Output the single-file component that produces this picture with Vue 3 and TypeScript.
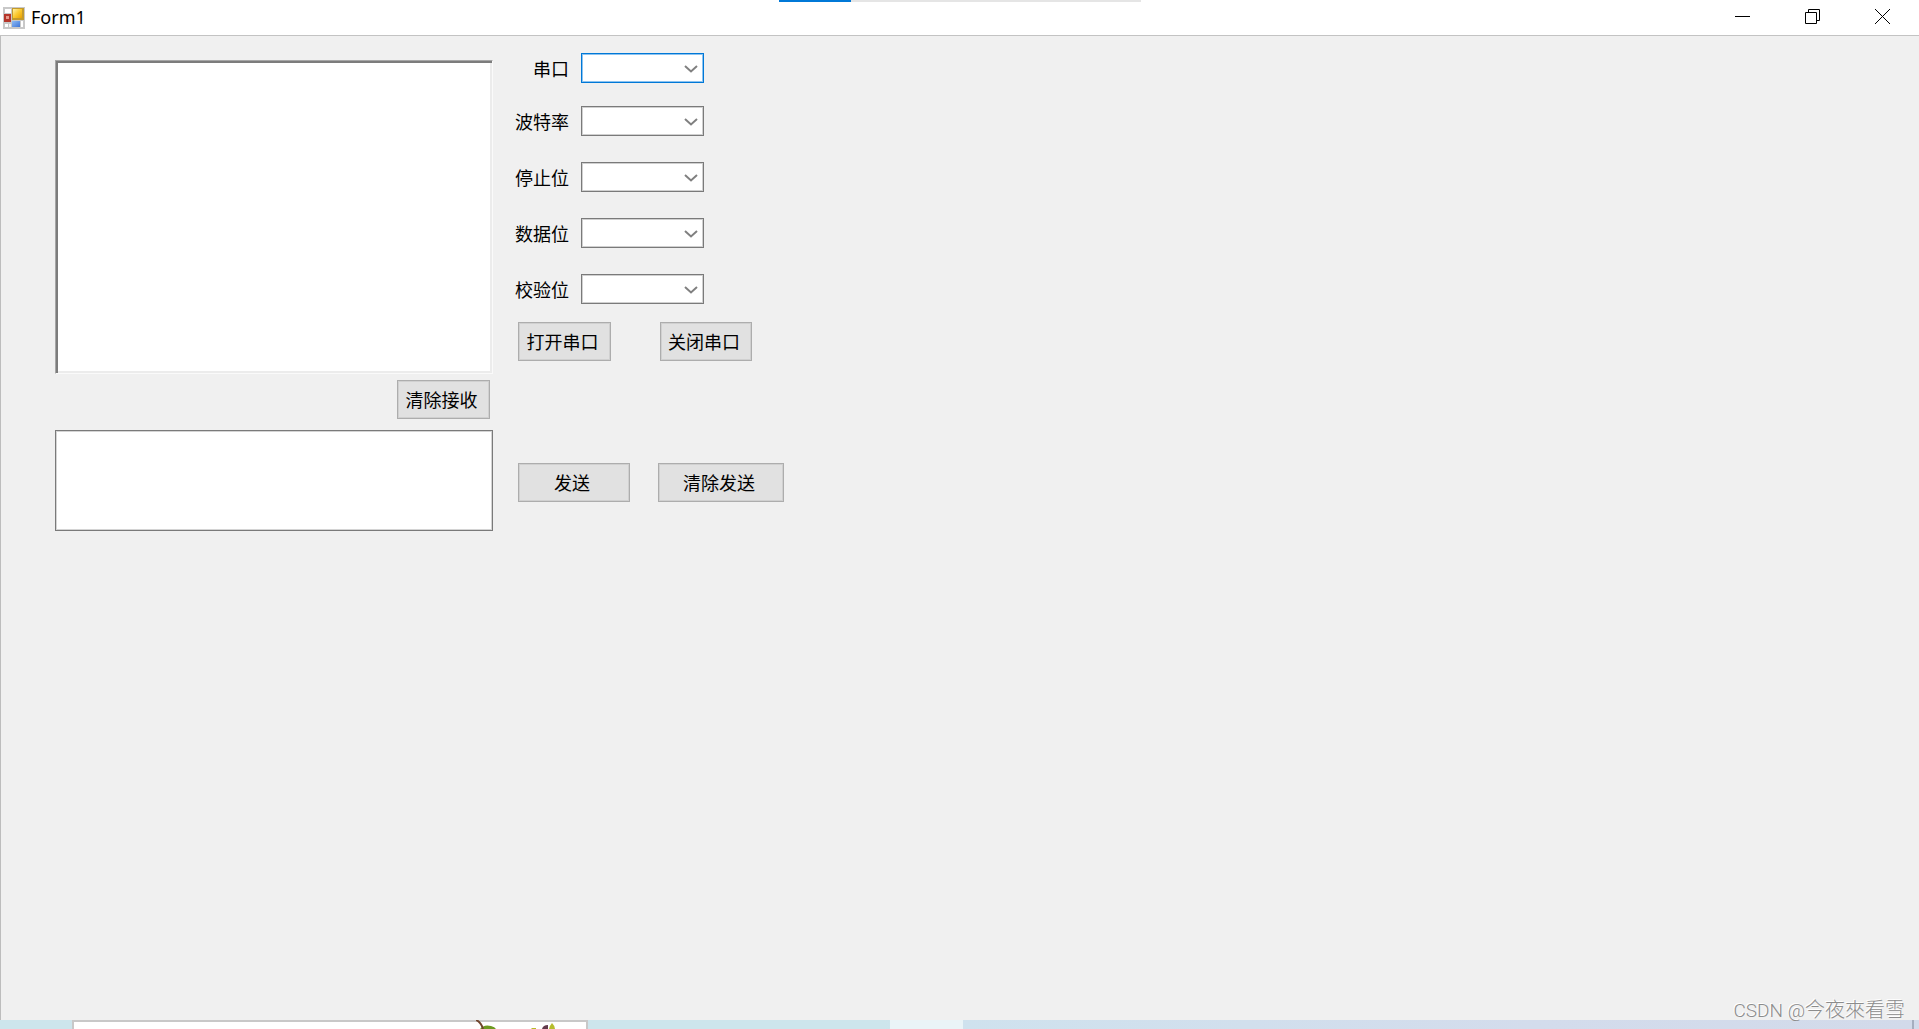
<script setup lang="ts">
import { reactive, ref } from 'vue'

interface Setting {
  id: string
  label: string
  options: string[]
}

const settings: Setting[] = [
  { id: 'port', label: '串口', options: [] },
  { id: 'baud', label: '波特率', options: [] },
  { id: 'stop', label: '停止位', options: [] },
  { id: 'data', label: '数据位', options: [] },
  { id: 'parity', label: '校验位', options: [] },
]

const values = reactive<Record<string, string>>({})
const received = ref('')
const outgoing = ref('')
</script>

<template>
  <div class="screen">
    <div class="loading"><div class="loading-bar"></div></div>
    <header class="titlebar">
      <svg class="app-icon" width="22" height="22" viewBox="0 0 22 22" aria-hidden="true">
        <defs>
          <linearGradient id="gold" x1="0" y1="0" x2="1" y2="1">
            <stop offset="0" stop-color="#fff0a0" />
            <stop offset="0.5" stop-color="#fbc92f" />
            <stop offset="1" stop-color="#e8a000" />
          </linearGradient>
          <linearGradient id="azure" x1="0" y1="0" x2="1" y2="1">
            <stop offset="0" stop-color="#8dbbf5" />
            <stop offset="1" stop-color="#3f76d8" />
          </linearGradient>
        </defs>
        <rect width="22" height="22" fill="#c8c8c8" />
        <rect x="2" y="2" width="6" height="4" fill="#fff" />
        <rect x="1" y="7" width="7" height="8" fill="#b5362b" />
        <rect x="3" y="9" width="3" height="3" fill="#e79a8c" />
        <rect x="9" y="1" width="12" height="12" fill="#c39a2c" />
        <rect x="10" y="2" width="9" height="9" fill="url(#gold)" />
        <rect x="9" y="14" width="8" height="6" fill="url(#azure)" />
        <rect x="2" y="17" width="3" height="3" fill="#fff" />
        <rect x="6" y="17" width="2" height="3" fill="#f4f4f4" />
        <rect x="18" y="14" width="2" height="6" fill="#fff" />
      </svg>
      <h1 class="title">Form1</h1>
      <button class="caption" type="button" aria-label="最小化">
        <svg width="16" height="16" viewBox="0 0 16 16"><path d="M0 7.5H15" /></svg>
      </button>
      <button class="caption" type="button" aria-label="还原">
        <svg width="16" height="16" viewBox="0 0 16 16">
          <path d="M.5 3.5H11.5V14.5H.5ZM3.5 3.5V.5H14.5V11.5H11.5" />
        </svg>
      </button>
      <button class="caption" type="button" aria-label="关闭">
        <svg width="16" height="16" viewBox="0 0 16 16"><path d="M0 0L15 15M15 0L0 15" /></svg>
      </button>
    </header>

    <main class="client">
      <section class="buffers">
        <textarea v-model="received" class="receive" aria-label="接收"></textarea>
        <button class="btn" type="button">清除接收</button>
        <textarea v-model="outgoing" class="send" aria-label="发送"></textarea>
      </section>

      <section class="controls">
        <div v-for="s in settings" :key="s.id" class="setting">
          <label :for="s.id">{{ s.label }}</label>
          <span class="combo">
            <select :id="s.id" v-model="values[s.id]" :class="{ active: s.id === 'port' }">
              <option v-for="o in s.options" :key="o">{{ o }}</option>
            </select>
            <svg width="14" height="8" viewBox="0 0 14 8" aria-hidden="true"><path d="M1 1L7 6.5L13 1" /></svg>
          </span>
        </div>
        <div class="row port-row">
          <button class="btn" type="button">打开串口</button>
          <button class="btn narrow" type="button">关闭串口</button>
        </div>
        <div class="row send-row">
          <button class="btn medium" type="button">发送</button>
          <button class="btn wide" type="button">清除发送</button>
        </div>
      </section>
    </main>

    <footer class="desktop">
      <div class="back-window">
        <svg width="84" height="9" viewBox="0 0 84 9" aria-hidden="true">
          <path d="M4 9Q8 4 15 6Q19 7 20 9Z" fill="#6d9a20" />
          <path d="M0 0Q5 2 7 9" fill="none" stroke="#70452d" stroke-width="2" />
          <path d="M55 9L56 8H60V9Z" fill="#b6bb28" />
          <path d="M66 9Q67 5 72 5V9Z" fill="#633a4c" />
          <path d="M73 9Q74 5 76 3Q79 6 79 9Z" fill="#b6bd2d" />
        </svg>
      </div>
      <div class="highlight"></div>
      <div class="edge"></div>
    </footer>
    <p class="watermark"><span>CSDN @</span>今夜來看雪</p>
  </div>
</template>

<style>
body {
  margin: 0;
}
</style>

<style scoped>
.screen {
  position: relative;
  display: flex;
  flex-direction: column;
  min-height: 100vh;
  background: #f0f0f0;
  color: #000;
  font: 18px/24px 'Noto Sans CJK SC', sans-serif;
}

.loading {
  position: absolute;
  top: 0;
  left: 50%;
  width: 362px;
  height: 2px;
  transform: translateX(-50%);
  background: #e5e5e5;
}

.loading-bar {
  width: 20%;
  height: 100%;
  background: #0078d7;
}

.titlebar {
  display: flex;
  align-items: center;
  height: 35px;
  padding-left: 3px;
  border-bottom: 1px solid #c3c3c3;
  background: #fff;
}

.title {
  flex: 1;
  margin: 0 0 2px 6px;
  font: 400 18px/24px 'Noto Sans', sans-serif;
}

.caption {
  display: flex;
  align-items: center;
  justify-content: center;
  width: 70px;
  height: 34px;
  padding: 0 2px 2px 0;
  border: 0;
  background: none;
}

.caption path {
  fill: none;
  stroke: #000;
}

.client {
  display: flex;
  flex: 1;
  gap: 22px;
  padding: 17px 54px 0;
  border-left: 1px solid #bdbdbd;
}

.buffers {
  display: flex;
  flex-direction: column;
  align-items: flex-end;
  width: 438px;
  padding-top: 7px;
}

textarea {
  display: block;
  box-sizing: border-box;
  width: 100%;
  margin: 0;
  padding: 6px;
  border-radius: 0;
  outline: 0;
  background: #fff;
  font: inherit;
  resize: none;
}

.receive {
  height: 314px;
  border: 1px solid;
  border-color: #a6a6a6 #fafafa #fafafa #a6a6a6;
  box-shadow: inset 2px 2px #7c7c7c, inset -2px -2px #ececec;
}

.send {
  height: 101px;
  border: 1px solid #7a7a7a;
  box-shadow: inset 0 0 0 1px #d4d4d4;
}

.btn {
  box-sizing: border-box;
  width: 93px;
  height: 39px;
  padding: 0 4px 2px 0;
  border: 1px solid #adadad;
  border-radius: 0;
  background: #e1e1e1;
  box-shadow: inset 0 0 0 1px #d0d0d0;
  color: #000;
  font: inherit;
}

.buffers .btn {
  margin: 6px 3px 11px;
}

.narrow {
  width: 92px;
}

.medium {
  width: 112px;
}

.wide {
  width: 126px;
}

.controls {
  display: flex;
  flex-direction: column;
}

.setting {
  display: flex;
  align-items: center;
  gap: 12px;
  margin-bottom: 26px;
}

.setting:first-child {
  margin-bottom: 23px;
}

.setting label {
  width: 54px;
  text-align: right;
}

.combo {
  position: relative;
  display: block;
  width: 123px;
  height: 30px;
}

.combo select {
  appearance: none;
  display: block;
  width: 100%;
  height: 100%;
  margin: 0;
  padding: 0 28px 0 6px;
  border: 1px solid #7a7a7a;
  border-radius: 0;
  box-shadow: inset 0 0 0 1px #d0d0d0;
  background: #fff;
  font: inherit;
}

.combo .active {
  border-color: #0078d7;
  box-shadow: inset 0 0 0 1px #8cc3f0;
}

.combo svg {
  position: absolute;
  top: 12px;
  right: 6px;
  pointer-events: none;
}

.combo path {
  fill: none;
  stroke: #808080;
  stroke-width: 2;
}

.row {
  display: flex;
  margin-left: 3px;
}

.port-row {
  gap: 49px;
  margin-top: -8px;
}

.send-row {
  gap: 28px;
  margin-top: 102px;
}

.desktop {
  display: flex;
  height: 9px;
  padding-left: 72px;
  background: linear-gradient(90deg, #cde5ec 0 46%, #cfe2ee 50%, #d3dcec 80%, #d2daea);
}

.back-window {
  box-sizing: border-box;
  width: 516px;
  height: 9px;
  padding-left: 402px;
  border: solid #c8c8c8;
  border-width: 2px 2px 0;
  background: #fff;
}

.back-window svg {
  display: block;
  margin-top: -2px;
}

.highlight {
  width: 73px;
  margin-left: 302px;
  background: #eaf4f7;
}

.edge {
  width: 2px;
  margin: 0 5px 0 auto;
  background: #a5aebf;
}

.watermark {
  position: absolute;
  right: 14px;
  bottom: 5px;
  margin: 0;
  color: #8c8c8c;
  font: 300 20px/26px 'Noto Sans CJK TC', sans-serif;
  text-shadow: -1px -1px #fff;
}

.watermark span {
  font: 300 19px/26px Roboto, sans-serif;
}
</style>
